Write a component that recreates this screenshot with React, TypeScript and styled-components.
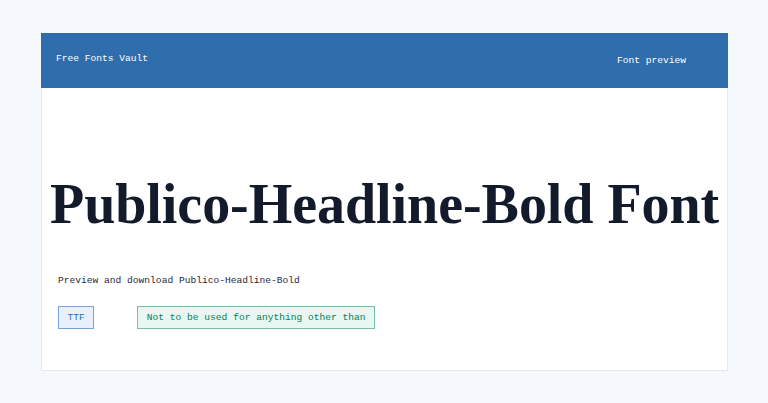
import React from "react";
import styled, { createGlobalStyle } from "styled-components";

const Global = createGlobalStyle`
  html, body { margin: 0; padding: 0; background: #f5f9fe; }
  body { font-family: "Liberation Mono", "DejaVu Sans Mono", monospace; }
`;

const Page = styled.div`
  padding: 33px 40px 0 41px;
`;

const Card = styled.div`
  background: #ffffff;
  border: 1px solid #e2e8f0;
  border-top: none;
  height: 337px;
  display: flex;
  flex-direction: column;
`;

const Header = styled.header`
  background: #2f6dac;
  height: 55px;
  display: flex;
  align-items: center;
  justify-content: space-between;
  padding: 0 42px 0 15px;
  margin: 0 -1px;
  color: #ffffff;
  font-size: 9.6px;
`;

const Brand = styled.div`
  margin-top: -4px;
`;

const Nav = styled.div`
  margin-top: -1px;
`;

const Body = styled.main`
  flex: 1;
  padding: 0 16px;
  display: flex;
  flex-direction: column;
`;

const Title = styled.h1`
  margin: 84px 0 0 -8px;
  font-family: "Liberation Serif", "DejaVu Serif", serif;
  font-weight: 700;
  font-size: 56px;
  line-height: 64px;
  color: #121a2b;
  white-space: nowrap;
  letter-spacing: -0.05px;
`;

const Desc = styled.p`
  margin: 39px 0 0 0;
  font-size: 9.6px;
  color: #1f2937;
`;

const Tags = styled.div`
  display: flex;
  gap: 43px;
  margin-top: 20px;
`;

const Tag = styled.span<{ $tone: "blue" | "green" }>`
  display: inline-flex;
  align-items: center;
  height: 23px;
  box-sizing: border-box;
  padding: 0 8.5px;
  font-size: 9.6px;
  border: 1px solid ${(p) => (p.$tone === "blue" ? "#7aa3d6" : "#79bda6")};
  background: ${(p) => (p.$tone === "blue" ? "#e7f0fc" : "#e7f7f1")};
  color: ${(p) => (p.$tone === "blue" ? "#2f6dac" : "#0e7a5a")};
`;

export default function App() {
  return (
    <>
      <Global />
      <Page>
        <Card>
          <Header>
            <Brand>Free Fonts Vault</Brand>
            <Nav>Font preview</Nav>
          </Header>
          <Body>
            <Title>Publico-Headline-Bold Font</Title>
            <Desc>Preview and download Publico-Headline-Bold</Desc>
            <Tags>
              <Tag $tone="blue">TTF</Tag>
              <Tag $tone="green">Not to be used for anything other than</Tag>
            </Tags>
          </Body>
        </Card>
      </Page>
    </>
  );
}
